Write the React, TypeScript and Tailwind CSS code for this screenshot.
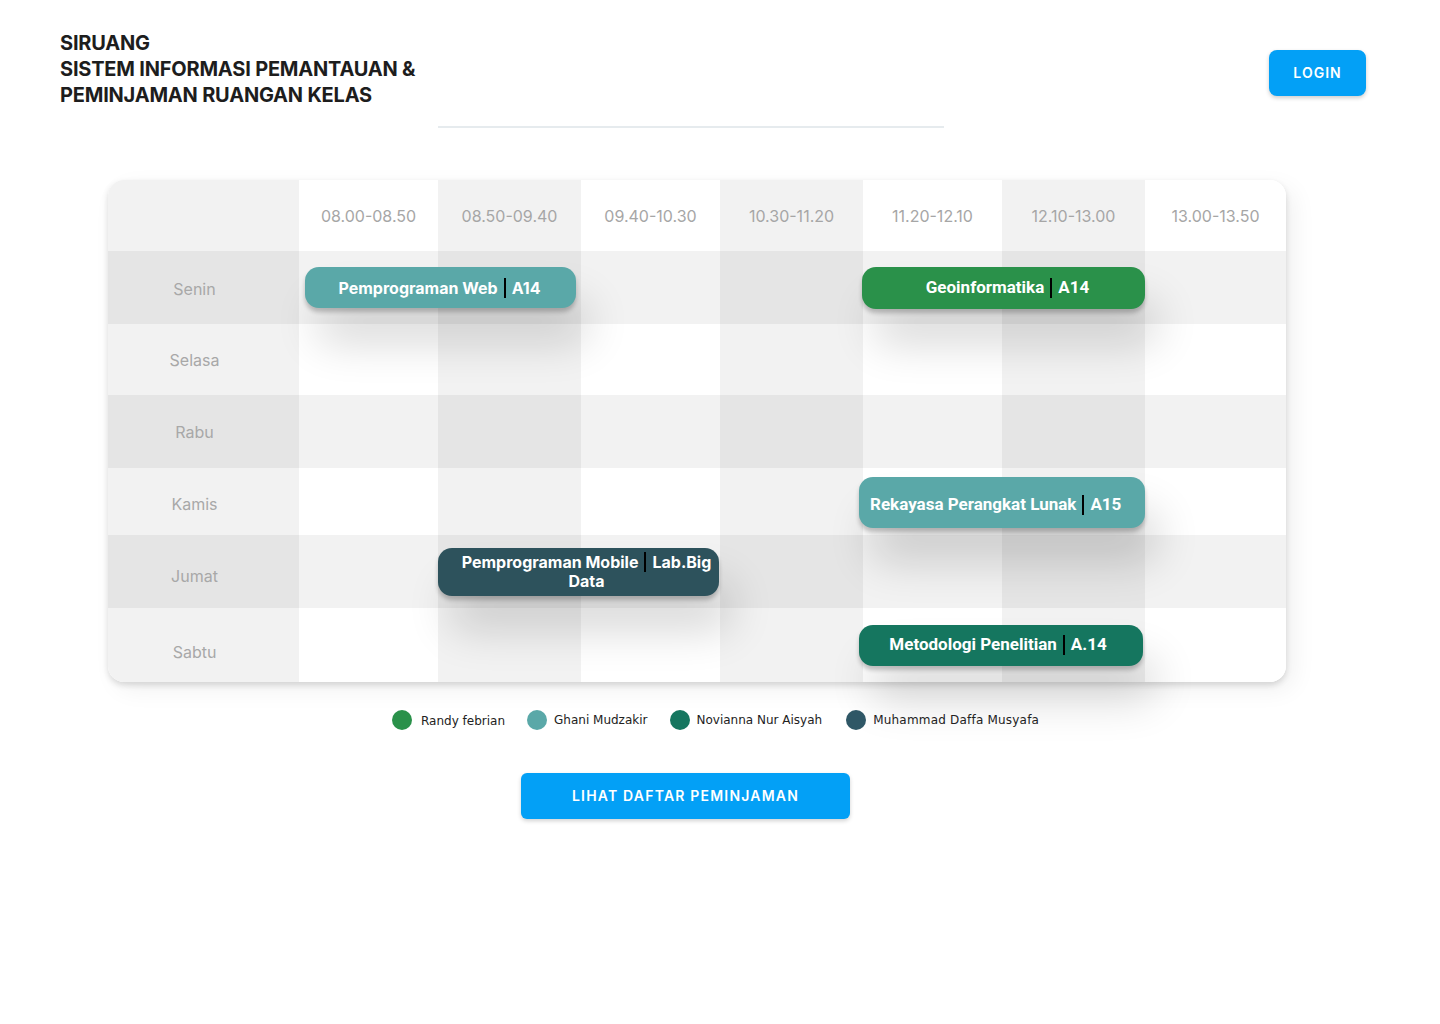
import React from "react";

const cols = [
  "08.00-08.50",
  "08.50-09.40",
  "09.40-10.30",
  "10.30-11.20",
  "11.20-12.10",
  "12.10-13.00",
  "13.00-13.50",
];
const days = ["Senin", "Selasa", "Rabu", "Kamis", "Jumat", "Sabtu"];

const colStart = [
  "col-start-1",
  "col-start-2",
  "col-start-3",
  "col-start-4",
  "col-start-5",
  "col-start-6",
  "col-start-7",
  "col-start-8",
];
const rowStart = [
  "row-start-1",
  "row-start-2",
  "row-start-3",
  "row-start-4",
  "row-start-5",
  "row-start-6",
  "row-start-7",
];

// shade levels
const shade = ["bg-white", "bg-[#f2f2f2]", "bg-[#e5e5e5]"];

function cellBg(r: number, c: number) {
  // c = 0 label column, 1..7 time columns
  let base = c === 0 ? 1 : c % 2 === 1 ? 0 : 1;
  const darkRow = r === 1 || r === 3 || r === 5;
  if (darkRow) base += 1;
  return shade[base];
}

function cornerClass(r: number, c: number) {
  if (r === 0 && c === 0) return "rounded-tl-[16px]";
  if (r === 0 && c === 7) return "rounded-tr-[16px]";
  if (r === 6 && c === 0) return "rounded-bl-[16px]";
  if (r === 6 && c === 7) return "rounded-br-[16px]";
  return "";
}

const dayPad = ["", "pt-[3px]", "pt-[0px]", "pt-[1px]", "pt-[5px]", "pt-[9px]", "pt-[14px]"];

function Sep() {
  return <span className="inline-block w-[2px] h-[20px] bg-black mx-[6px] align-middle" />;
}

const eventShadow =
  "shadow-[0_4px_4px_rgba(0,0,0,0.22),12px_34px_44px_rgba(0,0,0,0.16)]";

export default function App() {
  const cells: React.ReactNode[] = [];
  for (let r = 0; r < 7; r++) {
    for (let c = 0; c < 8; c++) {
      let content: React.ReactNode = null;
      if (r === 0 && c > 0) {
        content = (
          <span className="text-[16px] text-[#a6a6a6] font-['Inter',sans-serif]">{cols[c - 1]}</span>
        );
      } else if (r > 0 && c === 0) {
        content = (
          <span className={`text-[16px] text-[#a8a8a8] font-['Inter',sans-serif] pr-[18px] ${dayPad[r]}`}>
            {days[r - 1]}
          </span>
        );
      }
      cells.push(
        <div
          key={`${r}-${c}`}
          className={`${colStart[c]} ${rowStart[r]} ${cellBg(r, c)} ${cornerClass(r, c)} flex items-center justify-center`}
        >
          {content}
        </div>
      );
    }
  }

  return (
    <div className="w-[1440px] h-[1024px] bg-white relative font-['Inter',sans-serif]">
      {/* Header */}
      <div className="flex justify-between items-start pl-[60px] pr-[74px] pt-[30px]">
        <h1 className="text-[#1d1d1d] font-bold text-[20px] leading-[26px] tracking-[-0.2px] font-['Inter',sans-serif]">
          SIRUANG
          <br />
          SISTEM INFORMASI PEMANTAUAN &amp;
          <br />
          PEMINJAMAN RUANGAN KELAS
        </h1>
        <button className="mt-[20px] w-[97px] h-[46px] pb-[2px] rounded-[8px] bg-[#03a0f6] text-white text-[14px] font-semibold tracking-[1px] shadow-[0_2px_4px_rgba(0,0,0,0.2)] font-['Inter',sans-serif]">
          LOGIN
        </button>
      </div>

      {/* Divider */}
      <div className="ml-[438px] mt-[18px] w-[506px] h-[2px] bg-[#e6ebee]" />

      {/* Schedule card */}
      <div className="ml-[108px] mt-[52px] w-[1178px] rounded-[16px] shadow-[0_3px_6px_rgba(0,0,0,0.14),8px_8px_24px_rgba(0,0,0,0.06)]">
        <div className="grid grid-cols-[191px_139px_143px_139px_143px_139px_143px_141px] grid-rows-[71px_73px_71px_73px_67px_73px_74px]">
          {cells}

          {/* Events */}
          <div
            className={`col-start-2 col-span-2 row-start-2 self-center ml-[6px] mr-[5px] h-[41px] rounded-[14px] bg-[#5aa8a8] ${eventShadow} flex items-center justify-center text-white text-[16px] font-bold font-['Inter',sans-serif] pr-[2px]`}
          >
            <span>Pemprograman Web</span>
            <Sep />
            <span>A14</span>
          </div>

          <div
            className={`col-start-6 col-span-2 row-start-2 self-center ml-[-1px] h-[42px] rounded-[14px] bg-[#2a914a] ${eventShadow} flex items-center justify-center pl-[8px] text-white text-[17px] font-bold font-['Roboto',sans-serif]`}
          >
            <span>Geoinformatika</span>
            <Sep />
            <span>A14</span>
          </div>

          <div
            className={`col-start-6 col-span-2 row-start-5 self-center ml-[-4px] mt-[2px] h-[51px] rounded-[14px] bg-[#5aa8a8] ${eventShadow} flex items-center justify-start pl-[11px] pt-[4px] text-white text-[17px] font-bold font-['Roboto',sans-serif]`}
          >
            <span>Rekayasa Perangkat Lunak</span>
            <Sep />
            <span>A15</span>
          </div>

          <div
            className={`col-start-3 col-span-2 row-start-6 self-center mr-[1px] h-[48px] rounded-[14px] bg-[#2d525c] ${eventShadow} flex flex-col items-center justify-center pl-[16px] text-white text-[16px] leading-[19px] font-bold font-['Inter',sans-serif]`}
          >
            <div className="flex items-center">
              <span>Pemprograman Mobile</span>
              <Sep />
              <span>Lab.Big</span>
            </div>
            <span>Data</span>
          </div>

          <div
            className={`col-start-6 col-span-2 row-start-7 self-center ml-[-4px] mr-[2px] h-[41px] rounded-[14px] bg-[#15765f] ${eventShadow} flex items-center justify-center pr-[6px] text-white text-[17px] font-bold font-['Roboto',sans-serif]`}
          >
            <span>Metodologi Penelitian</span>
            <Sep />
            <span>A.14</span>
          </div>
        </div>
      </div>

      {/* Legend */}
      <div className="flex items-center ml-[392px] mt-[27px] text-[12px] text-[#222] font-['DejaVu_Sans',sans-serif]">
        <span className="w-[20px] h-[20px] rounded-full bg-[#2a914a]" />
        <span className="ml-[9px] mt-[3px]">Randy febrian</span>
        <span className="ml-[22px] w-[20px] h-[20px] rounded-full bg-[#5aa8a8]" />
        <span className="ml-[7px]">Ghani Mudzakir</span>
        <span className="ml-[22px] w-[20px] h-[20px] rounded-full bg-[#15765f]" />
        <span className="ml-[7px]">Novianna Nur Aisyah</span>
        <span className="ml-[24px] w-[20px] h-[20px] rounded-full bg-[#2f5766]" />
        <span className="ml-[7px] tracking-[0.2px]">Muhammad Daffa Musyafa</span>
      </div>

      {/* Button */}
      <button className="block ml-[521px] mt-[43px] w-[329px] h-[46px] pb-[2px] rounded-[6px] bg-[#03a0f6] text-white text-[14px] font-semibold tracking-[1.2px] shadow-[0_2px_4px_rgba(0,0,0,0.18)] font-['Inter',sans-serif]">
        LIHAT DAFTAR PEMINJAMAN
      </button>
    </div>
  );
}
